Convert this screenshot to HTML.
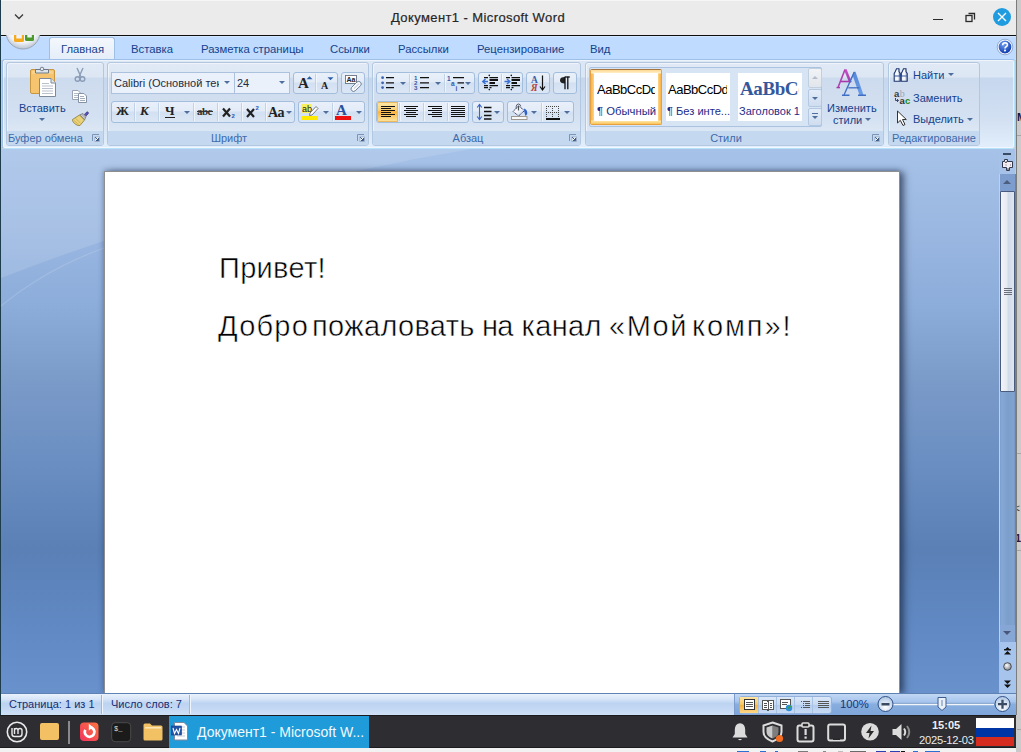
<!DOCTYPE html>
<html><head><meta charset="utf-8">
<style>
*{margin:0;padding:0;box-sizing:border-box}
html,body{width:1021px;height:752px;overflow:hidden;background:#c9c9c9;font-family:"Liberation Sans",sans-serif}
.a{position:absolute}
svg{position:absolute;overflow:visible}
#lstrip{left:0;top:0;width:1px;height:715px;background:#1d3d4d}
#rstrip{left:1016px;top:0;width:5px;height:748px;background:#cbcbcb}
#rborder{left:1016px;top:0;width:1px;height:715px;background:#7c7c7c}
#title{left:1px;top:0;width:1015px;height:35px;background:#ebebec;border-top:1px solid #f6f6f6}
#tline{left:1px;top:35px;width:1015px;height:1px;background:#0e0e0e}
#ttext{left:391px;top:10px;font-size:13px;line-height:15px;color:#262626;white-space:nowrap;letter-spacing:.4px;-webkit-text-stroke:.2px #262626}
#tabs{left:1px;top:36px;width:1015px;height:24px;background:#bfdbff;border-top:1px solid #d2e6ff}
#ribbon{left:2px;top:59px;width:1013px;height:90px;border:1px solid #9ebfe8;border-bottom-color:#b6e3fa;border-right-color:#b6e3fa;border-radius:3px;background:linear-gradient(#dce7f5 0,#dce7f5 17px,#c6d7ee 18px,#d2e0f2 60px,#e2eefb 88px)}
#ribbon:before{content:"";position:absolute;left:0;top:0;right:0;bottom:0;border:1px solid rgba(255,255,255,.55);border-radius:2px}
.grp{position:absolute;top:62px;height:84px;border:1px solid #b2c7e0;border-radius:3px;background:linear-gradient(#e0e9f5 0,#dde7f4 14px,#cddbee 15px,#d4e1f2 55px,#dce7f4 68px);box-shadow:inset 1px 1px 0 rgba(255,255,255,.5)}
.gl{position:absolute;left:0;right:0;bottom:0;height:14px;background:#c4d8f0;font-size:11px;color:#3e6aaa;text-align:center;line-height:15px;white-space:nowrap;border-radius:0 0 2px 2px}
.dl{position:absolute;width:8px;height:8px;bottom:3px;right:3px}
.tab{position:absolute;top:42px;font-size:11.3px;color:#15428b;white-space:nowrap;line-height:14px}
.t11{font-size:11px;color:#15428b;white-space:nowrap;position:absolute;line-height:13px}
.btng{position:absolute;border:1px solid #a3bddd;border-radius:3px;background:linear-gradient(#e9f0fa 0,#e2ebf7 45%,#d2e0f2 50%,#dce7f5 100%)}
.div{position:absolute;top:1px;bottom:1px;width:1px;background:#c0d2e8;box-shadow:1px 0 0 rgba(255,255,255,.55)}
.dd{position:absolute;width:0;height:0;border-left:3px solid transparent;border-right:3px solid transparent;border-top:3px solid #4e6e9e}
#doc{left:1px;top:149px;width:998px;height:544px;background:linear-gradient(#a6c2e8 0%,#9bb8e2 14%,#8dadda 28%,#7b9bc9 42%,#6b8fc2 57%,#5a80b6 73.5%,#6088c2 87%,#6991cc 100%)}
#page{left:104px;top:171px;width:796px;height:522px;background:#fff;border:1px solid #8e8e8e;border-bottom:none;box-shadow:4px 1px 7px rgba(20,30,55,.62),-1px -1px 5px rgba(40,60,100,.3)}
.dt{position:absolute;font-size:29px;color:#000;white-space:nowrap;line-height:34px;-webkit-text-stroke:.5px #fff}
#status{left:1px;top:693px;width:1015px;height:22px;border-top:1px solid #5f82b5;background:linear-gradient(#eaf2fc 0,#d6e5f8 25%,#bcd3f1 45%,#c3d8f3 70%,#cfe1f7 100%)}
#status2{left:734px;top:694px;width:282px;height:21px;background:linear-gradient(#c2d8f4 0,#a9c6ee 35%,#87aede 50%,#7fa5da 100%)}
#task{left:0;top:715px;width:1016px;height:33px;background:#2e2d32;border-top:1px solid #1c1c1e;border-bottom:1px solid #1c1c1e}
#bstrip{left:0;top:748px;width:1016px;height:4px;background:#f2f2f2}
</style></head><body>
<div id="lstrip" class="a"></div>
<div id="rstrip" class="a"></div>
<div id="rborder" class="a"></div>

<!-- title bar -->
<div id="title" class="a"></div>
<div id="tline" class="a"></div>
<svg style="left:14px;top:13px" width="10" height="7"><path d="M1 1.5 L5 5.5 L9 1.5" fill="none" stroke="#3a3a3a" stroke-width="1.3"/></svg>
<div id="ttext" class="a">Документ1 - Microsoft Word</div>
<div class="a" style="left:933px;top:19px;width:10px;height:1px;background:#2a2a2a"></div>
<svg style="left:965px;top:12px" width="11" height="11"><rect x="1" y="3.5" width="6" height="6" fill="none" stroke="#2a2a2a" stroke-width="1.3"/><path d="M3.5 1.5 H9.5 V7.5" fill="none" stroke="#2a2a2a" stroke-width="1.3"/></svg>
<svg style="left:992px;top:7px" width="20" height="20"><circle cx="10" cy="10" r="9" fill="#1f9ce0"/><path d="M6 6 L14 14 M14 6 L6 14" stroke="#fff" stroke-width="1.3"/></svg>

<!-- tabs -->
<div id="tabs" class="a"></div>
<!-- office button -->
<div class="a" style="left:1px;top:35px;width:45px;height:15px;overflow:hidden">
 <svg style="left:5px;top:-20px" width="36" height="36"><defs><radialGradient id="ob" cx="50%" cy="35%" r="65%"><stop offset="0" stop-color="#ffffff"/><stop offset=".7" stop-color="#f2f4f8"/><stop offset="1" stop-color="#b9c3d2"/></radialGradient></defs><circle cx="17" cy="17" r="17" fill="url(#ob)" stroke="#9aa6b6" stroke-width="1"/>
 <rect x="8" y="18" width="10" height="9" rx="1.5" fill="#f4aa1c"/><rect x="10.3" y="18" width="5.5" height="5.5" fill="#eef3f9"/>
 <rect x="19" y="18" width="9" height="8" rx="1.5" fill="#4c9a2a"/><rect x="21.3" y="18" width="4.5" height="4.5" fill="#eef3f9"/></svg>
</div>
<!-- active tab -->
<div class="a" style="left:49px;top:37px;width:66px;height:24px;border:1px solid #9ec0e6;border-bottom:none;border-radius:3px 3px 0 0;background:linear-gradient(#f4f8fd,#e3ecf8)"></div>
<div class="a" style="left:50px;top:59px;width:64px;height:2px;background:#e2ebf7"></div>
<div class="tab" style="left:61px">Главная</div>
<div class="tab" style="left:131px">Вставка</div>
<div class="tab" style="left:201px">Разметка страницы</div>
<div class="tab" style="left:330px">Ссылки</div>
<div class="tab" style="left:398px">Рассылки</div>
<div class="tab" style="left:477px">Рецензирование</div>
<div class="tab" style="left:590px">Вид</div>
<svg style="left:997px;top:39px" width="16" height="16"><defs><radialGradient id="hq" cx="40%" cy="30%" r="70%"><stop offset="0" stop-color="#6fa0f5"/><stop offset="1" stop-color="#0b35a8"/></radialGradient></defs><circle cx="8" cy="8" r="7" fill="url(#hq)" stroke="#fff" stroke-width="1.2"/><circle cx="8" cy="8" r="7.8" fill="none" stroke="#6d86b4" stroke-width=".6"/><path d="M5.6 6.2 Q5.8 3.8 8.1 3.8 Q10.5 3.9 10.4 6 Q10.3 7.3 8.8 8 Q8 8.4 8 9.6" fill="none" stroke="#fff" stroke-width="1.6"/><rect x="7.1" y="10.6" width="1.8" height="1.8" fill="#fff"/></svg>

<!-- ribbon -->
<div id="ribbon" class="a"></div>
<svg width="0" height="0"><defs>
<symbol id="launch" viewBox="0 0 8 8"><path d="M0.5 7 V0.5 H7" fill="none" stroke="#7c94b6" stroke-width="1"/><rect x="3" y="3" width="4.5" height="4.5" fill="#fff" stroke="#8aa0c0" stroke-width=".8"/><path d="M3.2 3.2 L6.5 6.5 M6.5 4 V6.5 H4" fill="none" stroke="#3d5a86" stroke-width="1"/></symbol>
</defs></svg>

<!-- Clipboard group -->
<div class="grp" style="left:6px;width:98px"><div class="gl" style="text-align:left;padding-left:1px">Буфер обмена</div>
<svg class="dl" viewBox="0 0 8 8"><use href="#launch"/></svg></div>
<svg style="left:30px;top:67px" width="27" height="31">
 <rect x="0.5" y="2.5" width="24" height="24" rx="1.5" fill="#f6c46e" stroke="#c9973f"/>
 <rect x="2" y="4" width="21" height="3" fill="#fbd894" opacity=".7"/>
 <path d="M5.5 2.5 H18.5 V6 H5.5 Z" fill="#dfe4ea" stroke="#6d7886" stroke-width="1"/>
 <circle cx="12" cy="2" r="1.8" fill="#e6eaef" stroke="#6d7886" stroke-width=".9"/>
 <path d="M9.5 11.5 H21 L25.5 16 V29.5 H9.5 Z" fill="#fff" stroke="#7f8a98"/>
 <path d="M21 11.5 V16 H25.5" fill="#e3e7ec" stroke="#7f8a98"/>
 <path d="M12 16.5 H19 M12 19 H23 M12 21.5 H23 M12 24 H23 M12 26.5 H23" stroke="#b9c1cc" stroke-width="1"/>
</svg>
<div class="t11" style="left:19px;top:102px">Вставить</div>
<div class="dd" style="left:39px;top:118px"></div>
<svg style="left:74px;top:67px" width="12" height="16"><path d="M3 1 L7 10 M9 1 L5 10" stroke="#8b9cb6" stroke-width="1.4" fill="none"/><circle cx="3.5" cy="12" r="2.3" fill="none" stroke="#8b9cb6" stroke-width="1.4"/><circle cx="8.5" cy="12" r="2.3" fill="none" stroke="#8b9cb6" stroke-width="1.4"/></svg>
<svg style="left:72px;top:90px" width="16" height="14">
 <path d="M0.5 0.5 H6 L8.5 3 V9.5 H0.5 Z" fill="#fff" stroke="#98a3b3"/><path d="M2 3.5 H6 M2 5.5 H7 M2 7.5 H7" stroke="#a9b3c1" stroke-width=".9"/>
 <path d="M6.5 3.5 H12 L14.5 6 V12.5 H6.5 Z" fill="#fff" stroke="#8592a6"/><path d="M8 6.5 H12 M8 8.5 H13 M8 10.5 H13" stroke="#98a4b6" stroke-width=".9"/>
</svg>
<svg style="left:71px;top:111px" width="18" height="16">
 <path d="M12.5 4.5 L15.5 1.2 Q16.5 0.5 17.2 1.3 Q17.8 2.2 17 3 L14 6 Z" fill="#5b4fc0" stroke="#3a3380" stroke-width=".7"/>
 <path d="M8.5 4 L12 2.5 L15 5.5 L13.5 9 Z" fill="#c9ccd4" stroke="#6b6f78" stroke-width=".8"/>
 <path d="M9.5 4.5 L14 9 M11 3.5 L14.5 7" stroke="#8a8e96" stroke-width=".7"/>
 <path d="M8.5 4 L13.5 9 L9 14.5 Q6 15 3.5 12.5 Q1 10 1.5 8.5 Z" fill="#ead27a" stroke="#8c7a32" stroke-width=".8"/>
 <path d="M3 9.5 L7.5 13.5 M4.5 7.5 L9.5 12" stroke="#c9ad4a" stroke-width=".8"/>
</svg>

<!-- Font group -->
<div class="grp" style="left:107px;width:262px"><div class="gl" style="padding-right:18px">Шрифт</div>
<svg class="dl" viewBox="0 0 8 8"><use href="#launch"/></svg></div>
<div class="a" style="left:111px;top:72px;width:124px;height:22px;border:1px solid #abc1dd;background:#eaf1fa"></div>
<div class="a" style="left:114px;top:76px;width:105px;height:14px;overflow:hidden;font-size:11px;line-height:14px;color:#1d2c44;white-space:nowrap">Calibri (Основной текст)</div>
<div class="dd" style="left:224px;top:81px"></div>
<div class="a" style="left:234px;top:72px;width:56px;height:22px;border:1px solid #abc1dd;background:#eaf1fa"></div>
<div class="a" style="left:237px;top:76px;font-size:11px;line-height:14px;color:#1d2c44">24</div>
<div class="dd" style="left:279px;top:81px"></div>
<div class="btng" style="left:293px;top:72px;width:45px;height:22px"><div class="div" style="left:21px"></div></div>
<div class="a" style="left:298px;top:74px;font-family:'Liberation Serif';font-weight:bold;font-size:15px;line-height:18px;color:#222">A</div>
<svg style="left:306px;top:76px" width="8" height="4"><path d="M0.5 3.3 L3.5 0.3 L6.5 3.3 Z" fill="#2f5fa8"/></svg>
<div class="a" style="left:321px;top:80px;font-family:'Liberation Serif';font-weight:bold;font-size:10px;line-height:12px;color:#222">A</div>
<svg style="left:327px;top:77px" width="8" height="4"><path d="M0.5 0.3 L3.5 3.3 L6.5 0.3 Z" fill="#2f5fa8"/></svg>
<div class="btng" style="left:341px;top:72px;width:24px;height:22px"></div>
<svg style="left:344px;top:74px" width="20" height="20">
 <rect x="1.5" y="1.5" width="11" height="8" fill="#fff" stroke="#6a7280" stroke-width=".9"/>
 <text x="2.5" y="8.3" font-family="Liberation Sans" font-size="7" font-weight="bold" fill="#222">Aa</text>
 <path d="M7.5 13.5 L13 8 Q14.8 6.5 16.5 8.2 Q18.2 10 16.5 11.7 L11.2 16.8 Q9.5 18.3 7.9 16.8 Q6.2 15.2 7.5 13.5 Z" fill="#f6f8fb" stroke="#6f7f98" stroke-width="1"/>
 <path d="M10 14.5 L15 9.8" stroke="#b9c6da" stroke-width="1"/>
</svg>
<div class="btng" style="left:111px;top:101px;width:184px;height:22px">
 <div class="div" style="left:22px"></div><div class="div" style="left:46px"></div><div class="div" style="left:81px"></div><div class="div" style="left:105px"></div><div class="div" style="left:129px"></div><div class="div" style="left:153px"></div>
</div>
<div class="a" style="left:116px;top:103px;font-family:'Liberation Serif';font-weight:bold;font-size:13px;line-height:16px;color:#222">Ж</div>
<div class="a" style="left:140px;top:103px;font-family:'Liberation Serif';font-weight:bold;font-style:italic;font-size:13px;line-height:16px;color:#222">К</div>
<div class="a" style="left:165px;top:103px;font-family:'Liberation Serif';font-weight:bold;font-size:13px;line-height:16px;color:#222">Ч</div>
<div class="a" style="left:165px;top:117px;width:10px;height:1.2px;background:#222"></div>
<div class="dd" style="left:184px;top:111px"></div>
<div class="a" style="left:197px;top:104px;font-family:'Liberation Serif';font-weight:bold;font-size:11px;line-height:14px;color:#333;letter-spacing:-.6px">abc</div>
<div class="a" style="left:197px;top:111px;width:16px;height:1px;background:#333"></div>
<svg style="left:222px;top:107px" width="14" height="11"><path d="M1 1.5 L8 9.5 M8 1.5 L1 9.5" stroke="#222" stroke-width="2.2"/><text x="9.5" y="10.5" font-family="Liberation Sans" font-size="6" font-weight="bold" fill="#2a58b0">2</text></svg>
<svg style="left:246px;top:104px" width="14" height="14"><path d="M1 5 L8 13 M8 5 L1 13" stroke="#222" stroke-width="2.2"/><text x="9.5" y="6" font-family="Liberation Sans" font-size="6" font-weight="bold" fill="#2a58b0">2</text></svg>
<div class="a" style="left:268px;top:105px;font-family:'Liberation Serif';font-weight:bold;font-size:14px;line-height:16px;color:#222;letter-spacing:-.5px">Aa</div>
<div class="dd" style="left:286px;top:111px"></div>
<div class="btng" style="left:298px;top:101px;width:67px;height:22px"><div class="div" style="left:33px"></div></div>
<svg style="left:301px;top:103px" width="18" height="18">
 <rect x="0.5" y="1" width="10" height="9" fill="#f6f060"/>
 <text x="1" y="9" font-family="Liberation Sans" font-size="9" fill="#222">ab</text>
 <path d="M9 10 L15 3.5 L17 5.5 L11 12 L8.5 12.5 Z" fill="#fff" stroke="#6b6b6b" stroke-width=".9"/>
 <rect x="0.5" y="13" width="16.5" height="4" fill="#ffea00"/>
</svg>
<div class="dd" style="left:323px;top:111px"></div>
<div class="a" style="left:336px;top:102px;font-family:'Liberation Serif';font-weight:bold;font-size:15px;line-height:16px;color:#2b4f9f">A</div>
<div class="a" style="left:335px;top:116px;width:16px;height:4px;background:#ee1010"></div>
<div class="dd" style="left:356px;top:111px"></div>

<!-- Paragraph group -->
<div class="grp" style="left:372px;width:209px"><div class="gl" style="padding-right:17px">Абзац</div>
<svg class="dl" viewBox="0 0 8 8"><use href="#launch"/></svg></div>
<div class="btng" style="left:376px;top:72px;width:99px;height:22px"><div class="div" style="left:32px"></div><div class="div" style="left:67px"></div></div>
<svg style="left:380px;top:75px" width="90" height="16">
 <g fill="#3d62b0"><circle cx="2.6" cy="2.7" r="1.4"/><circle cx="2.6" cy="7.8" r="1.4"/><circle cx="2.6" cy="12.6" r="1.4"/></g>
 <path d="M6 2.7 H14 M6 7.8 H14 M6 12.6 H14" stroke="#111" stroke-width="1.3"/>
 <g font-family="Liberation Sans" font-size="6.2" font-weight="bold" fill="#3558a8"><text x="34" y="5.2">1</text><text x="34" y="10.2">2</text><text x="34" y="15.2">3</text></g>
 <path d="M40 2.7 H49 M40 7.8 H49 M40 12.6 H49" stroke="#111" stroke-width="1.3"/>
 <g font-family="Liberation Sans" font-size="6.5" font-weight="bold" fill="#3558a8"><text x="67" y="5.5">1</text><text x="71" y="10.5">a</text><text x="75.5" y="15.5">i</text></g>
 <path d="M73 2.7 H84 M77.5 7.8 H84 M81 12.6 H84" stroke="#111" stroke-width="1.3"/>
</svg>
<div class="dd" style="left:400px;top:82px"></div>
<div class="dd" style="left:435px;top:82px"></div>
<div class="dd" style="left:465px;top:82px"></div>
<div class="btng" style="left:478px;top:72px;width:45px;height:22px"><div class="div" style="left:22px"></div></div>
<svg style="left:482px;top:74px" width="40" height="17"><g transform="translate(0,0)"><circle cx="7.3" cy="1.4" r=".8" fill="#111"/><circle cx="7.3" cy="15.6" r=".8" fill="#111"/><path d="M2 3.6 H6 M7.5 3.6 H16 M2 11.6 H6 M7.5 11.6 H16 M2 13.6 H6 M7.5 13.6 H9.5" stroke="#111" stroke-width="1.1"/><path d="M7.5 6.1 H16 M7.5 9.1 H13" stroke="#111" stroke-width="2"/><path d="M6 7.5 H1 M3.5 5 L0.8 7.5 L3.5 10" stroke="#3a6fd6" stroke-width="1.5" fill="none"/></g><g transform="translate(22,0)"><circle cx="7.3" cy="1.4" r=".8" fill="#111"/><circle cx="7.3" cy="15.6" r=".8" fill="#111"/><path d="M2 3.6 H6 M7.5 3.6 H16 M2 11.6 H6 M7.5 11.6 H16 M2 13.6 H6 M7.5 13.6 H9.5" stroke="#111" stroke-width="1.1"/><path d="M7.5 6.1 H16 M7.5 9.1 H13" stroke="#111" stroke-width="2"/><path d="M0.5 7.5 H5.5 M3 5 L5.8 7.5 L3 10" stroke="#3a6fd6" stroke-width="1.5" fill="none"/></g></svg>
<div class="btng" style="left:526px;top:72px;width:24px;height:22px"></div>
<svg style="left:530px;top:75px" width="16" height="17">
 <text x="1" y="7.7" font-family="Liberation Serif" font-weight="bold" font-size="9.5" fill="#3a5ca8">A</text>
 <text x="1" y="16.2" font-family="Liberation Serif" font-weight="bold" font-style="italic" font-size="9.5" fill="#b5453f">Я</text>
 <path d="M12.5 0.5 V14.5 M10 11.5 L12.5 15 L15 11.5" stroke="#111" stroke-width="1.2" fill="none"/>
</svg>
<div class="btng" style="left:553px;top:72px;width:24px;height:22px"></div>
<svg style="left:559px;top:76px" width="12" height="14"><path d="M5.8 1 H10.8" stroke="#111" stroke-width="1.3"/><path d="M6 1 Q1 1 1 4.2 Q1 7.5 6 7.5 Z" fill="#222"/><path d="M6 0.8 V13.2 M8.8 0.8 V13.2" stroke="#111" stroke-width="1.3"/></svg>
<div class="btng" style="left:376px;top:101px;width:93px;height:22px"><div class="div" style="left:22px"></div><div class="div" style="left:46px"></div><div class="div" style="left:70px"></div></div>
<div class="a" style="left:377px;top:102px;width:21px;height:20px;border-radius:2px 0 0 2px;background:linear-gradient(#fde9a8 0,#fbd17a 40%,#f8b440 50%,#fbd47e 80%,#fde5a0 100%);box-shadow:inset 0 0 0 1px #e9b860"></div>
<svg style="left:380px;top:105px" width="90" height="14">
 <path d="M1 1.5 H15 M1 3.5 H11 M1 5.5 H15 M1 7.5 H11 M1 9.5 H15 M1 11.5 H11" stroke="#111" stroke-width="1.1"/>
 <path d="M24 1.5 H38 M26 3.5 H36 M24 5.5 H38 M26 7.5 H36 M24 9.5 H38 M26 11.5 H36" stroke="#111" stroke-width="1.1"/>
 <path d="M48 1.5 H62 M52 3.5 H62 M48 5.5 H62 M52 7.5 H62 M48 9.5 H62 M52 11.5 H62" stroke="#111" stroke-width="1.1"/>
 <path d="M71 1.5 H85 M71 3.5 H85 M71 5.5 H85 M71 7.5 H85 M71 9.5 H85 M71 11.5 H85" stroke="#111" stroke-width="1.1"/>
</svg>
<div class="btng" style="left:472px;top:101px;width:32px;height:22px"></div>
<svg style="left:476px;top:103px" width="18" height="18">
 <path d="M3.5 2 V16 M1.2 4.5 L3.5 1.5 L5.8 4.5 M1.2 13.5 L3.5 16.5 L5.8 13.5" stroke="#3866c4" stroke-width="1.1" fill="none"/>
 <path d="M8 4.5 H15.5 M8 8.5 H15.5 M8 12.5 H15.5 M8 16 H15.5" stroke="#111" stroke-width="1.3"/>
</svg>
<div class="dd" style="left:494px;top:111px"></div>
<div class="btng" style="left:507px;top:101px;width:67px;height:22px"><div class="div" style="left:33px"></div></div>
<svg style="left:510px;top:103px" width="20" height="18">
 <defs><linearGradient id="bk" x1="0" y1="0" x2="1" y2="1"><stop offset="0" stop-color="#ffffff"/><stop offset=".5" stop-color="#f4f6fb"/><stop offset="1" stop-color="#a9bde0"/></linearGradient></defs>
 <path d="M3 8.4 L8.5 3 L14.6 7.5 L8.6 13 Z" fill="url(#bk)" stroke="#2c3a5e" stroke-width="1" stroke-dasharray="1.2 .6"/>
 <path d="M6.2 6 V3.5 Q6.5 1 8.5 1 Q10.5 1 10.7 3.5" fill="none" stroke="#555b66" stroke-width="1"/>
 <path d="M8.5 3 V7.5" stroke="#4a4f58" stroke-width="1.2"/>
 <path d="M14 5.5 Q17.5 6.5 17.2 10.5 Q16.8 13 15.2 12.6 Q14.2 9.5 14 5.5 Z" fill="#2f63cc"/>
 <rect x="1.5" y="13.5" width="15.5" height="3" fill="#f6f8fb" stroke="#9d9890" stroke-width="1"/>
</svg>
<div class="dd" style="left:531px;top:111px"></div>
<svg style="left:546px;top:106px" width="14" height="14" shape-rendering="crispEdges"><g fill="#444"><rect x="12" y="4" width="1" height="1"/><rect x="4" y="0" width="1" height="1"/><rect x="12" y="10" width="1" height="1"/><rect x="4" y="6" width="1" height="1"/><rect x="8" y="0" width="1" height="1"/><rect x="0" y="2" width="1" height="1"/><rect x="10" y="0" width="1" height="1"/><rect x="10" y="6" width="1" height="1"/><rect x="8" y="6" width="1" height="1"/><rect x="0" y="8" width="1" height="1"/><rect x="6" y="2" width="1" height="1"/><rect x="12" y="0" width="1" height="1"/><rect x="6" y="8" width="1" height="1"/><rect x="12" y="6" width="1" height="1"/><rect x="0" y="4" width="1" height="1"/><rect x="0" y="10" width="1" height="1"/><rect x="6" y="4" width="1" height="1"/><rect x="6" y="10" width="1" height="1"/><rect x="12" y="2" width="1" height="1"/><rect x="12" y="8" width="1" height="1"/><rect x="0" y="0" width="1" height="1"/><rect x="2" y="0" width="1" height="1"/><rect x="0" y="6" width="1" height="1"/><rect x="2" y="6" width="1" height="1"/><rect x="6" y="0" width="1" height="1"/><rect x="6" y="6" width="1" height="1"/></g><rect x="0" y="12" width="14" height="1.5" fill="#111"/></svg>
<div class="dd" style="left:564px;top:111px"></div>

<!-- Styles group -->
<div class="grp" style="left:585px;width:299px"><div class="gl" style="padding-right:17px">Стили</div>
<svg class="dl" viewBox="0 0 8 8"><use href="#launch"/></svg></div>
<div class="a" style="left:589px;top:67px;width:233px;height:60px;border:1px solid #a9c3e0;border-radius:2px;background:#d6e4f4"></div>
<div class="a" style="left:590px;top:69px;width:72px;height:56px;border:1px solid #e6a040;border-top-color:#a8743e;border-radius:2px;background:linear-gradient(90deg,#fbb040 0,#fde0a0 4px,#fde0a0 66px,#fbb040 70px)"></div><div class="a" style="left:591px;top:70px;width:70px;height:54px;background:linear-gradient(#fdd890 0,#fff0c8 3px,transparent 4px,transparent 50px,#fde6a6 51px,#fbc45a 54px)"></div>
<div class="a" style="left:594px;top:73px;width:64px;height:48px;background:#fff"></div>
<div class="a" style="left:666px;top:73px;width:64px;height:48px;background:#fff"></div>
<div class="a" style="left:738px;top:73px;width:64px;height:48px;background:#fff"></div>
<div class="a" style="left:597px;top:81px;width:58px;height:18px;overflow:hidden;font-size:13px;line-height:17px;color:#000;white-space:nowrap;letter-spacing:-.5px">AaBbCcDdEe</div>
<div class="a" style="left:597px;top:105px;font-size:11.3px;line-height:13px;color:#1c2a8a;white-space:nowrap">¶ Обычный</div>
<div class="a" style="left:668px;top:81px;width:59px;height:18px;overflow:hidden;font-size:13px;line-height:17px;color:#000;white-space:nowrap;letter-spacing:-.5px">AaBbCcDdEe</div>
<div class="a" style="left:667px;top:105px;font-size:11.1px;line-height:13px;color:#1c2a8a;white-space:nowrap">¶ Без инте...</div>
<div class="a" style="left:740px;top:78px;width:59px;height:23px;overflow:hidden;font-family:'Liberation Serif';font-weight:bold;font-size:19px;line-height:22px;color:#35589d;white-space:nowrap;letter-spacing:-.4px">AaBbCcDd</div>
<div class="a" style="left:739px;top:105px;font-size:11px;line-height:13px;color:#1c2a8a;white-space:nowrap">Заголовок 1</div>
<div class="a" style="left:808px;top:68px;width:14px;height:20px;border:1px solid #c2cfde;border-radius:2px;background:linear-gradient(#f1f3f6,#e1e6ec)"></div>
<div class="a" style="left:812px;top:76px;width:0;height:0;border-left:3px solid transparent;border-right:3px solid transparent;border-bottom:3px solid #b3bdca"></div>
<div class="a" style="left:808px;top:89px;width:14px;height:18px;border:1px solid #b4c8e2;border-radius:2px;background:linear-gradient(#e3ecf8,#cfddf0)"></div>
<div class="dd" style="left:812px;top:97px"></div>
<div class="a" style="left:808px;top:108px;width:14px;height:18px;border:1px solid #b4c8e2;border-radius:2px;background:linear-gradient(#e3ecf8,#cfddf0)"></div>
<div class="a" style="left:812px;top:113px;width:6px;height:1px;background:#4e6e9e"></div>
<div class="dd" style="left:812px;top:116px"></div>
<svg style="left:836px;top:68px" width="32" height="30">
 <defs><linearGradient id="pa" x1="0" y1="0" x2="0" y2="1"><stop offset="0" stop-color="#c94fc9"/><stop offset="1" stop-color="#a43aa8"/></linearGradient><linearGradient id="ba" x1="0" y1="0" x2="1" y2="1"><stop offset="0" stop-color="#4f82d4"/><stop offset="1" stop-color="#6d9ee8"/></linearGradient></defs>
 <path d="M9.3 1.5 L14.5 14.5" stroke="url(#pa)" stroke-width="2.6"/><path d="M2 19.5 L9 1.5" stroke="#b040b0" stroke-width="1.6"/><path d="M5 13.5 H13" stroke="#a63aa8" stroke-width="1.6"/><path d="M0.5 19.6 H4" stroke="#a63aa8" stroke-width="1.4"/>
 <path d="M8.2 27 L18 3.8 L19.5 3.8 L27.5 27 H23.5 L17 8.5 Z" fill="url(#ba)"/>
 <path d="M8 27 L18.2 4" stroke="#3f6fc4" stroke-width="1.3"/>
 <path d="M12.3 19.8 H23.5" stroke="#3f6fc4" stroke-width="1.3"/>
 <path d="M6 27.3 H13.5 M22 27.3 H30" stroke="#3f6fc4" stroke-width="1.5"/>
</svg>
<div class="t11" style="left:827px;top:102px">Изменить</div>
<div class="t11" style="left:833px;top:114px">стили</div>
<div class="dd" style="left:865px;top:118px"></div>

<!-- Editing group -->
<div class="grp" style="left:888px;width:92px"><div class="gl">Редактирование</div></div>
<svg style="left:893px;top:68px" width="17" height="14">
 <defs><linearGradient id="bn" x1="0" y1="0" x2="1" y2="0"><stop offset="0" stop-color="#dfe8f7"/><stop offset=".5" stop-color="#ffffff"/><stop offset="1" stop-color="#9fb3d6"/></linearGradient></defs>
 <g stroke="#1d356e" stroke-width="1.1" fill="url(#bn)">
 <path d="M3.5 0.8 H6 V3.5 L7.2 5.5 V13.2 H1.2 V5.5 L2.3 3.5 Z"/>
 <path d="M10.5 0.8 H13 V3.5 L14.2 5.5 V13.2 H8.2 V5.5 L9.3 3.5 Z"/>
 </g>
 <rect x="6.5" y="5.5" width="2.5" height="3" fill="#2b4a8c"/>
 <path d="M1.5 8 H7 M8.5 8 H14" stroke="#3a5899" stroke-width="1.2"/>
</svg>
<div class="t11" style="left:913px;top:69px">Найти</div>
<div class="dd" style="left:948px;top:73px"></div>
<svg style="left:894px;top:88px" width="18" height="17">
 <text x="0" y="8.5" font-family="Liberation Sans" font-weight="bold" font-size="9.5" fill="#3a3a3a">a</text>
 <text x="5.8" y="8.5" font-family="Liberation Serif" font-size="10" fill="#a0a6ae">b</text>
 <path d="M1.5 10 V12.5 H4.5 M3 11 L4.5 12.5 L3 14" stroke="#3a4a6a" stroke-width="1" fill="none"/>
 <text x="5.5" y="15.5" font-family="Liberation Sans" font-weight="bold" font-size="9.5" fill="#333">a</text>
 <text x="11" y="15.5" font-family="Liberation Sans" font-weight="bold" font-size="9.5" fill="#188a18">c</text>
</svg>
<div class="t11" style="left:913px;top:92px">Заменить</div>
<svg style="left:896px;top:110px" width="12" height="17">
 <path d="M1.5 1 V13 L4.3 10.3 L7 15.5 L9 14.5 L6.5 9.5 H10.3 Z" fill="#fff" stroke="#333" stroke-width="1"/>
</svg>
<div class="t11" style="left:913px;top:113px">Выделить</div>
<div class="dd" style="left:967px;top:118px"></div>

<!-- doc area -->
<div id="doc" class="a"></div>
<svg style="left:1px;top:149px" width="998" height="544"><path d="M0 129 Q230 40 470 0 H0 Z" fill="#fff" fill-opacity=".13"/><path d="M0 157 Q45 120 103 99" stroke="#ffffff" stroke-width="1.2" fill="none" opacity=".15"/></svg>
<div id="page" class="a"></div>
<div class="dt" style="left:219px;top:251px;letter-spacing:.3px">Привет!</div>
<div class="dt" style="left:218px;top:309px;letter-spacing:1.2px">Добро</div><div class="dt" style="left:312px;top:309px;letter-spacing:.34px">пожаловать</div><div class="dt" style="left:482px;top:309px;letter-spacing:-.7px">на</div><div class="dt" style="left:521.5px;top:309px;letter-spacing:.37px">канал</div><div class="dt" style="left:609px;top:309px;letter-spacing:1.5px">«Мой</div><div class="dt" style="left:692px;top:309px;letter-spacing:1.9px">комп»!</div>
<!-- scrollbar -->
<div class="a" style="left:999px;top:149px;width:16px;height:25px;background:#a6c2e9"></div>
<div class="a" style="left:1003px;top:153px;width:8px;height:2px;background:#3b4b63"></div>
<svg style="left:1001px;top:158px" width="14" height="14"><path d="M1.5 3.5 H3.5 V1.5 H6.5 V3.5 H11.5 V9.5 H8.5 V12.5 H5.5 V9.5 H1.5 Z" fill="#f3ecf2" stroke="#2f3a50" stroke-width="1"/><path d="M4 3.5 L5 5 L6.5 2.5" stroke="#333" stroke-width=".8" fill="none"/><path d="M5 6.5 V7.5 M9.5 6.5 V7.5" stroke="#555" stroke-width=".8"/><path d="M6 11.5 L7 10 L8 11.5 Z" fill="#fff" stroke="#555" stroke-width=".6"/></svg>
<div class="a" style="left:999px;top:174px;width:17px;height:519px;background:linear-gradient(90deg,#b8d2f4 0,#b8d2f4 1px,#7b9fcc 1px,#86a8d6 3px,#7b9ecb 9px,#80a3d0 15px,#6e8fbd 16px,#5e7aa6 17px)"></div>
<div class="a" style="left:1000px;top:174px;width:15px;height:17px;background:#7c9dcd"></div>
<div class="a" style="left:1003px;top:180px;width:0;height:0;border-left:4px solid transparent;border-right:4px solid transparent;border-bottom:4px solid #4d5d7d"></div>
<div class="a" style="left:1000px;top:191px;width:15px;height:201px;border:1px solid #4a5b7e;border-radius:1px;background:linear-gradient(90deg,#f2f4f8 0,#e6ebf2 45%,#cfdae8 55%,#dfe6ef 100%)"></div>
<div class="a" style="left:1004px;top:288px;width:8px;height:7px;background:repeating-linear-gradient(#6a6e78 0,#6a6e78 1px,transparent 1px,transparent 2px)"></div>
<div class="a" style="left:1000px;top:625px;width:15px;height:17px;background:#86a7d6"></div>
<div class="a" style="left:1003px;top:631px;width:0;height:0;border-left:4.5px solid transparent;border-right:4.5px solid transparent;border-top:4.5px solid #4a5677"></div>
<div class="a" style="left:999px;top:642px;width:17px;height:51px;background:#a6c4ec"></div>
<svg style="left:1002px;top:645px" width="11" height="45">
 <path d="M2 5.5 L5.5 2 L9 5.5 Z M2 9.5 L5.5 6 L9 9.5 Z" fill="#111"/><path d="M2 4.5 H9" stroke="#111"/>
 <defs><radialGradient id="sb" cx="40%" cy="35%" r="60%"><stop offset="0" stop-color="#fff"/><stop offset="1" stop-color="#8a8f98"/></radialGradient></defs>
 <circle cx="5.5" cy="21.5" r="3.8" fill="url(#sb)" stroke="#333" stroke-width=".8"/>
 <path d="M2 35.5 L5.5 39 L9 35.5 Z M2 39.5 L5.5 43 L9 39.5 Z" fill="#111"/>
</svg>

<div id="status" class="a"></div>
<div id="status2" class="a"></div>
<div id="task" class="a"></div>
<div id="bstrip" class="a"></div>
<div class="a" style="left:737px;top:750.5px;width:12px;height:1.5px;background:#2b6fd0"></div><div class="a" style="left:760px;top:750.5px;width:6px;height:1.5px;background:#2b6fd0"></div><div class="a" style="left:775px;top:750.5px;width:3px;height:1.5px;background:#2b6fd0"></div><div class="a" style="left:798px;top:750.5px;width:10px;height:1.5px;background:#7a7a7a"></div><div class="a" style="left:823px;top:750.5px;width:3px;height:1.5px;background:#888"></div><div class="a" style="left:838px;top:750.5px;width:5px;height:1.5px;background:#bdbdbd"></div><div class="a" style="left:850px;top:750.5px;width:16px;height:1.5px;background:#6a6a6a"></div><div class="a" style="left:876px;top:750.5px;width:10px;height:1.5px;background:#2a3fb0"></div><div class="a" style="left:890px;top:750.5px;width:10px;height:1.5px;background:#2a3fb0"></div><div class="a" style="left:901px;top:750.5px;width:4px;height:1.5px;background:#111"></div><div class="a" style="left:913px;top:750.5px;width:5px;height:1.5px;background:#2b6fd0"></div><div class="a" style="left:925px;top:750.5px;width:15px;height:1.5px;background:#2b6fd0"></div><div class="a" style="left:1017px;top:135px;width:4px;height:1px;background:#a5a5a5"></div><div class="a" style="left:1017px;top:453px;width:4px;height:1px;background:#a5a5a5"></div><div class="a" style="left:1017px;top:550px;width:4px;height:1px;background:#a5a5a5"></div><div class="a" style="left:1017px;top:729px;width:4px;height:1px;background:#a5a5a5"></div><div class="a" style="left:1017px;top:110px;width:4px;height:14px;overflow:hidden"><div class="a" style="left:0;top:0;font-size:11px;font-weight:bold;line-height:14px;color:#161640">М</div></div><div class="a" style="left:1017px;top:531px;width:4px;height:14px;overflow:hidden"><div class="a" style="left:-2px;top:0;font-size:11px;font-weight:bold;line-height:14px;color:#3a1030">1</div></div><div class="a" style="left:1017px;top:502px;width:4px;height:14px;overflow:hidden"><div class="a" style="left:-3px;top:0;font-size:10px;line-height:14px;color:#333">&lt;</div></div>
<!-- status contents -->
<div class="a" style="left:101px;top:695px;width:1px;height:19px;background:#9fb8d8;box-shadow:1px 0 0 #eef5fd"></div>
<div class="a" style="left:189px;top:695px;width:1px;height:19px;background:#9fb8d8;box-shadow:1px 0 0 #eef5fd"></div>
<div class="t11" style="left:9px;top:698px;color:#162e72">Страница: 1 из 1</div>
<div class="t11" style="left:111px;top:698px;color:#162e72">Число слов: 7</div>
<div class="a" style="left:734px;top:694px;width:1px;height:21px;background:#7e9ccb"></div>
<div class="a" style="left:739px;top:696px;width:93px;height:18px;border:1px solid #93b1da;border-radius:3px;background:linear-gradient(#dbe8f8,#c5d9f2 50%,#b3cdef 51%,#c9dcf4)"></div>
<div class="a" style="left:740px;top:697px;width:18px;height:16px;background:linear-gradient(#fde6a4,#f9c35e 50%,#f7b23c 51%,#fcd98a)"></div>
<div class="a" style="left:758px;top:697px;width:1px;height:16px;background:#a9c2e2"></div>
<div class="a" style="left:776px;top:697px;width:1px;height:16px;background:#a9c2e2"></div>
<div class="a" style="left:794px;top:697px;width:1px;height:16px;background:#a9c2e2"></div>
<div class="a" style="left:812px;top:697px;width:1px;height:16px;background:#a9c2e2"></div>
<svg style="left:743px;top:698px" width="90" height="14" shape-rendering="crispEdges">
 <rect x="1.5" y="1.5" width="10" height="10" fill="#fff" stroke="#333" stroke-width="1.6"/><path d="M3 4.5 H10 M3 6.5 H10 M3 8.5 H10" stroke="#555" stroke-width="1"/>
 <path d="M19.5 2.5 H24 L25 3.5 L26 2.5 H30.5 V11.5 H26 L25 12.5 L24 11.5 H19.5 Z" fill="#fff" stroke="#555" stroke-width="1.2"/><path d="M25 3.5 V11.5 M21 5.5 H23.5 M21 7.5 H23.5 M21 9.5 H23.5 M26.5 5.5 H29 M26.5 7.5 H29 M26.5 9.5 H29" stroke="#555" stroke-width="1"/>
 <rect x="37.5" y="1.5" width="10" height="9" fill="#fff" stroke="#555" stroke-width="1.3"/><path d="M39 4.5 H45 M39 6.5 H44" stroke="#555" stroke-width="1"/>
 <circle cx="46" cy="10" r="3.2" fill="#2f8fd8" shape-rendering="auto"/><path d="M44 8.5 Q46 9 46.5 11 M47 8 L48 9" stroke="#3aa040" stroke-width="1.2" fill="none" shape-rendering="auto"/>
 <path d="M58 3.5 H59 M60 3.5 H67 M60 5.5 H61 M62 5.5 H67 M60 7.5 H61 M62 7.5 H67 M58 9.5 H59 M60 9.5 H67" stroke="#555" stroke-width="1"/>
 <path d="M75 3.5 H86 M75 5.5 H86 M75 7.5 H86 M75 9.5 H86" stroke="#555" stroke-width="1"/>
</svg>
<div class="t11" style="left:840px;top:698px;font-size:11.3px;color:#1a3378">100%</div>
<defs></defs>
<svg style="left:876px;top:695px" width="135" height="18">
 <defs><radialGradient id="zb" cx="50%" cy="70%" r="60%"><stop offset="0" stop-color="#ffffff"/><stop offset="1" stop-color="#b9cde8"/></radialGradient></defs>
 <path d="M16 9.5 H118" stroke="#f2f6fb" stroke-width="1.5"/><path d="M16 8.5 H118" stroke="#7d98c0" stroke-width=".6"/>
 <circle cx="9.5" cy="9" r="7.5" fill="url(#zb)" stroke="#2e4f86" stroke-width="1"/>
 <rect x="5.5" y="8" width="8" height="2.5" fill="#3a4a62"/>
 <circle cx="126.5" cy="9" r="7.5" fill="url(#zb)" stroke="#2e4f86" stroke-width="1"/>
 <path d="M122 9.2 H131 M126.5 4.7 V13.7" stroke="#3a4a62" stroke-width="2.3"/>
 <path d="M62 2.5 H70 V12 L66 15.5 L62 12 Z" fill="#e9f0fa" stroke="#3d5d8e" stroke-width="1"/><path d="M66 5 V11" stroke="#6a84ad" stroke-width="1"/>
</svg>

<!-- taskbar -->
<svg style="left:6px;top:721px" width="22" height="22"><circle cx="11" cy="11" r="9.7" fill="none" stroke="#e9e9e9" stroke-width="1.6"/><path d="M6 7 V13 Q6 15.5 8.5 15.5 H13.5 Q16 15.5 16 13 V9.5 Q16 7.5 14 7.5 Q12 7.5 12 9.5 V13 M8.5 7 V13 M12 9.5 Q12 7.5 10.2 7.5 Q8.5 7.5 8.5 9.5" fill="none" stroke="#e9e9e9" stroke-width="1.4"/></svg>
<div class="a" style="left:40px;top:723px;width:19px;height:17px;background:#f3c064;border-radius:2px"></div>
<div class="a" style="left:68px;top:721px;width:2px;height:23px;background:#8a8a8a"></div>
<svg style="left:80px;top:722px" width="19" height="20"><defs><linearGradient id="ff" x1="0" y1="1" x2="1" y2="0"><stop offset="0" stop-color="#f0345e"/><stop offset="1" stop-color="#ff7440"/></linearGradient></defs><rect x="0" y="0.5" width="18.5" height="18.5" rx="4" fill="url(#ff)"/><path d="M5.3 7.8 A4.8 4.8 0 1 0 10 5.2" fill="none" stroke="#fff" stroke-width="2.7"/><path d="M8.8 1.8 L13 5.2 L8.8 8.4 Z" fill="#fff"/></svg>
<svg style="left:111px;top:722px" width="21" height="21"><rect x="0.7" y="0.7" width="19" height="19" rx="3.5" fill="#1b1b1b" stroke="#4a4a4a" stroke-width="1"/><text x="3" y="8.5" font-family="Liberation Mono" font-size="7" fill="#ddd">$_</text></svg>
<svg style="left:143px;top:723px" width="20" height="18"><path d="M0.5 2 Q0.5 0.5 2 0.5 H7 L9 2.5 H18 Q19.5 2.5 19.5 4 V16 Q19.5 17.5 18 17.5 H2 Q0.5 17.5 0.5 16 Z" fill="#f1c163"/><rect x="2" y="4" width="16" height="1.6" fill="#fbe4b5"/></svg>
<div class="a" style="left:169px;top:716px;width:200px;height:32px;background:#1e9bd8"></div>
<svg style="left:171px;top:722px" width="18" height="19"><path d="M3.5 0.5 H13 L16.5 4 V18 H3.5 Z" fill="#fff" stroke="#7f8aa0" stroke-width="1"/><path d="M6 5 H14 M6 8 H14 M6 11 H14 M6 14 H14" stroke="#b4bdcc" stroke-width=".8"/><rect x="0.5" y="4" width="10" height="9" fill="#2454a8" stroke="#173a80" stroke-width=".6"/><path d="M2 6 L3.5 11.5 L5.5 7.5 L7.5 11.5 L9 6" fill="none" stroke="#fff" stroke-width="1.1"/></svg>
<div class="a" style="left:197px;top:724px;font-size:14px;line-height:17px;color:#f2f8fc;white-space:nowrap">Документ1 - Microsoft W...</div>
<svg style="left:731px;top:722px" width="18" height="20"><path d="M9 1.2 Q4 1.5 3.8 7.5 V12 L1.5 15.5 H16.5 L14.2 12 V7.5 Q14 1.5 9 1.2 Z" fill="#dcdcdc"/><path d="M7 17 Q9 19.5 11 17 Z" fill="#dcdcdc"/></svg>
<svg style="left:762px;top:721px" width="23" height="22"><path d="M10.5 1.5 L19.5 4.5 V11 Q19.5 17 10.5 20.5 Q1.5 17 1.5 11 V4.5 Z" fill="none" stroke="#dcdcdc" stroke-width="2"/><path d="M10.5 4.5 L16.5 6.5 V11 Q16.5 15 10.5 17.5 Z" fill="#7d7d7d"/><path d="M10.5 4.5 L4.5 6.5 V11 Q4.5 15 10.5 17.5 Z" fill="#c9c9c9"/><circle cx="17.5" cy="17.5" r="3.6" fill="#f26d21"/></svg>
<svg style="left:796px;top:722px" width="19" height="21"><rect x="1.5" y="3.5" width="16" height="16" rx="2" fill="none" stroke="#dcdcdc" stroke-width="2"/><rect x="6" y="1" width="7" height="4" rx="1" fill="#2a2a2c" stroke="#dcdcdc" stroke-width="1.6"/><rect x="8.5" y="7" width="2.2" height="6" fill="#dcdcdc"/><rect x="8.5" y="14.5" width="2.2" height="2.2" fill="#dcdcdc"/></svg>
<svg style="left:827px;top:723px" width="20" height="19"><path d="M3 1.5 H16 Q18 1.5 18 3.5 V15.5 Q18 17.5 16 17.5 H3 Q1.2 17.5 1.2 15.5 V3.5 Q1.2 1.5 3 1.5 Z" fill="none" stroke="#dcdcdc" stroke-width="2"/><path d="M6 16 H13" stroke="#2a2a2c" stroke-width="2"/></svg>
<svg style="left:860px;top:722px" width="20" height="20"><circle cx="10" cy="9.8" r="8.8" fill="#dcdcdc"/><path d="M11.5 3.5 L6 11 H9.5 L8.5 16.5 L14 9 H10.5 Z" fill="#2a2a2c"/></svg>
<svg style="left:891px;top:723px" width="22" height="18"><path d="M1.5 6 H5 L10.5 1 V17 L5 12 H1.5 Z" fill="#dcdcdc"/><path d="M13 5.5 Q15.5 9 13 12.5" stroke="#dcdcdc" stroke-width="2" fill="none"/><path d="M16 3 Q20.5 9 16 15" stroke="#8b8b8b" stroke-width="2" fill="none"/></svg>
<div class="a" style="left:932px;top:719px;font-size:11px;font-weight:bold;line-height:13px;color:#f0f0f0;white-space:nowrap">15:05</div>
<div class="a" style="left:919px;top:734px;font-size:11.2px;line-height:13px;color:#eaeaea;white-space:nowrap;letter-spacing:-.25px">2025-12-03</div>
<div class="a" style="left:976px;top:718px;width:38px;height:9.5px;background:#fff"></div>
<div class="a" style="left:976px;top:727.5px;width:38px;height:9.5px;background:#0035a6"></div>
<div class="a" style="left:976px;top:737px;width:38px;height:9px;background:#d62b1f"></div>
</body></html>
